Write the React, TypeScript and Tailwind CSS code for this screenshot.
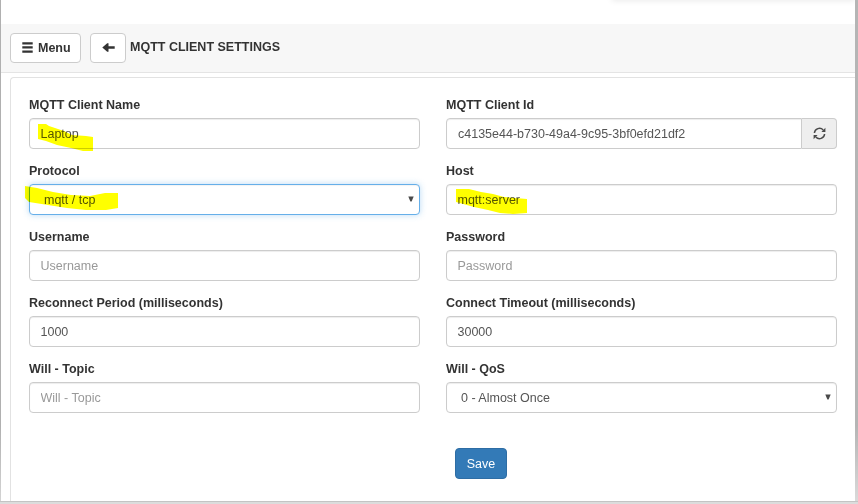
import type { ReactNode } from "react";

const fieldBase =
  "block h-[31px] w-full rounded-[4px] border border-[#ccc] bg-white px-[10.5px] text-[12.5px] leading-[17px] text-[#555] shadow-[inset_0_1px_1px_rgba(0,0,0,0.075)] outline-none placeholder:text-[#999]";

function Field({ label, children }: { label: string; children: ReactNode }) {
  return (
    <div className="h-[66px]">
      <label className="block h-[20px] text-[12.5px] font-bold leading-[15px] text-[#333]">{label}</label>
      <div className="relative">{children}</div>
    </div>
  );
}

function Highlight({ points }: { points: string }) {
  return (
    <svg className="pointer-events-none absolute left-0 top-px h-[31px] w-[120px] overflow-visible mix-blend-multiply" viewBox="0 0 120 31">
      <polygon points={points} fill="#ff0" />
    </svg>
  );
}

function Select({ value, focused = false }: { value: string; focused?: boolean }) {
  return (
    <>
      <select
        className={
          focused
            ? "block h-[31px] w-full appearance-none rounded-[4px] border border-[#66afe9] bg-white px-[14px] pt-px text-[12.5px] leading-[17px] text-[#555] shadow-[inset_0_1px_1px_rgba(0,0,0,0.05),0_0_6px_rgba(102,175,233,0.45)] outline-none"
            : "block h-[31px] w-full appearance-none rounded-[4px] border border-[#ccc] bg-white px-[14px] pt-px text-[12.5px] leading-[17px] text-[#555] shadow-[inset_0_1px_1px_rgba(0,0,0,0.075)] outline-none"
        }
        defaultValue={value}
      >
        <option>{value}</option>
      </select>
      <svg className="pointer-events-none absolute right-[6px] top-[12px] h-[6px] w-[6px]" viewBox="0 0 6 6">
        <path d="M.3 .5h5.4L3.6 5.5H2.4z" fill="#4a4a4a" />
      </svg>
    </>
  );
}

function BarsIcon() {
  return (
    <svg className="-mt-[2px] h-[11px] w-[11px]" viewBox="0 0 11 11" fill="#333">
      <path d="M.3 .2h10.4v2.3H.3zM.3 4.3h10.4v2.3H.3zM.3 8.4h10.4v2.3H.3z" />
    </svg>
  );
}

function ArrowIcon() {
  return (
    <svg className="-mt-px h-[9px] w-[13px]" viewBox="0 0 13 9" fill="#333">
      <path d="M.3 4.5 5.2 .3h1.3v2.9h6.2v2.6H6.5v2.9H5.2z" />
    </svg>
  );
}

function RefreshIcon() {
  return (
    <svg className="-mt-px h-[13px] w-[13px]" viewBox="0 0 13 13">
      <path d="M1.4 6A5.1 5.1 0 0 1 10.2 3M11.6 7a5.1 5.1 0 0 1-8.8 3" fill="none" stroke="#4a4a4a" strokeWidth="1.5" />
      <path d="M12.4.8v4.1H8.4zM.6 12.2V8.1h4z" fill="#4a4a4a" />
    </svg>
  );
}

export default function App() {
  return (
    <div className="flex h-[504px] w-[858px] flex-col overflow-hidden bg-[#dcdcdc] font-['Liberation_Sans',Arial,sans-serif]">
      <div className="flex h-[501px] shrink-0">
        <div className="w-px shrink-0 bg-linear-to-b from-[#b0b0b0] from-85% to-[#d4d4d4]" />
        <div className="flex w-[854px] shrink-0 flex-col overflow-hidden bg-white">
          <div className="flex h-[24px] shrink-0 justify-end overflow-hidden">
            <div className="-mt-1 h-[4px] w-[243px] shadow-[0_0_6px_rgba(0,0,0,0.13)]" />
          </div>
          <header className="flex h-[49px] shrink-0 items-start border-b border-[#e4e4e4] bg-[#f7f7f7] pl-[9px] pt-[9px]">
            <button className="flex h-[30px] w-[71px] items-center rounded-[4px] border border-[#ccc] bg-white pl-[11px] text-[12.5px] font-bold text-[#333]">
              <BarsIcon />
              <span className="ml-[5px]">Menu</span>
            </button>
            <button className="ml-[9px] flex h-[30px] w-[36px] items-center justify-center rounded-[4px] border border-[#ccc] bg-white">
              <ArrowIcon />
            </button>
            <h1 className="ml-[4px] mt-[6px] text-[12.5px] font-bold leading-[17px] text-[#333]">MQTT CLIENT SETTINGS</h1>
          </header>
          <main className="ml-[9px] mt-[4px] flex grow flex-col rounded-tl-[4px] border-l border-t border-[#e2e2e2] pl-[18px] pt-[20px]">
            <div className="grid grid-cols-[391px_391px] gap-x-[26px]">
              <Field label="MQTT Client Name">
                <input className={fieldBase} defaultValue="Laptop" />
                <Highlight points="9,5 17,5 20,7 35,12 43,16 57,17 64,18 64,32 54,32 42,29 28,26 17,22 9,20" />
              </Field>
              <Field label="MQTT Client Id">
                <div className="flex">
                  <input className="block h-[31px] w-[356px] rounded-l-[4px] border border-[#ccc] bg-white px-[11px] text-[12.5px] leading-[17px] text-[#555] shadow-[inset_0_1px_1px_rgba(0,0,0,0.075)] outline-none" defaultValue="c4135e44-b730-49a4-9c95-3bf0efd21df2" />
                  <button className="flex h-[31px] w-[35px] items-center justify-center rounded-r-[4px] border border-l-0 border-[#ccc] bg-[#eee]">
                    <RefreshIcon />
                  </button>
                </div>
              </Field>
              <Field label="Protocol">
                <Select value="mqtt / tcp" focused />
                <Highlight points="-4,1 8,3 24,7 42,10 61,11 76,8 89,8 89,23 77,25 57,25 38,23 19,20 0,17 -4,13" />
              </Field>
              <Field label="Host">
                <input className={fieldBase} defaultValue="mqtt:server" />
                <Highlight points="10,4 23,4 35,7 47,9 58,12 69,13 81,14 81,28 67,29 54,28 42,25 28,22 10,17" />
              </Field>
              <Field label="Username"><input className={fieldBase} placeholder="Username" /></Field>
              <Field label="Password"><input className={fieldBase} placeholder="Password" /></Field>
              <Field label="Reconnect Period (milliseconds)"><input className={fieldBase} defaultValue="1000" /></Field>
              <Field label="Connect Timeout (milliseconds)"><input className={fieldBase} defaultValue="30000" /></Field>
              <Field label="Will - Topic"><input className={fieldBase} placeholder="Will - Topic" /></Field>
              <Field label="Will - QoS"><Select value="0 - Almost Once" /></Field>
            </div>
            <button className="ml-[426px] mt-[20px] h-[31px] w-[52px] rounded-[4px] border border-[#2e6da4] bg-[#337ab7] pt-px text-[12.5px] text-white">Save</button>
          </main>
        </div>
        <div className="w-[3px] shrink-0 bg-linear-to-b from-[#b5b5b5] from-85% to-[#dadada]" />
      </div>
      <div className="h-px shrink-0 bg-[#c4c4c4]" />
    </div>
  );
}
